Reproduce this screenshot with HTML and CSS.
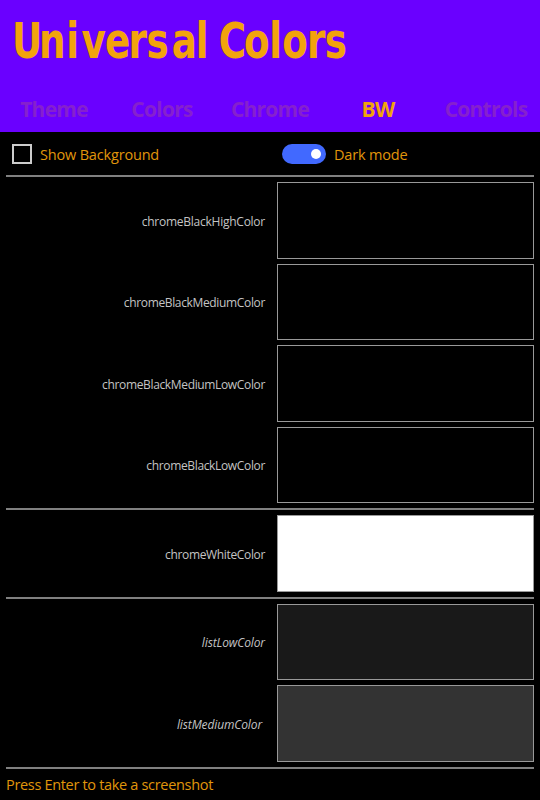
FILE: index.html
```
<!DOCTYPE html>
<html lang="en">
<head>
<meta charset="utf-8">
<title>Universal Colors</title>
<link rel="stylesheet" href="styles.css">
</head>
<body>
<header class="header">
  <svg class="title" width="540" height="80" role="heading" aria-level="1">
    <text transform="scale(.84 1)" y="58" x="14.2 46.5 79 97 125 153 174.5 204.5 233 249 260.5 290.5 320.5 336 365.5 386.5">Universal Colors</text>
  </svg>
  <nav class="tabs">
    <a class="tab">Theme</a>
    <a class="tab">Colors</a>
    <a class="tab">Chrome</a>
    <a class="tab active">BW</a>
    <a class="tab">Controls</a>
  </nav>
</header>
<main class="main">
  <div class="options">
    <label class="option"><span class="checkbox"></span><span class="option-text">Show Background</span></label>
    <label class="option"><span class="toggle"></span><span class="option-text">Dark mode</span></label>
  </div>
  <section class="group">
    <div class="row tall"><span class="name loose">chromeBlackHighColor</span><div class="swatch black"></div></div>
    <div class="row"><span class="name">chromeBlackMediumColor</span><div class="swatch black"></div></div>
    <div class="row tall"><span class="name">chromeBlackMediumLowColor</span><div class="swatch black"></div></div>
    <div class="row"><span class="name">chromeBlackLowColor</span><div class="swatch black"></div></div>
  </section>
  <section class="group">
    <div class="row tall"><span class="name">chromeWhiteColor</span><div class="swatch white"></div></div>
  </section>
  <section class="group">
    <div class="row"><span class="name italic">listLowColor</span><div class="swatch low"></div></div>
    <div class="row tall"><span class="name italic inset">listMediumColor</span><div class="swatch medium"></div></div>
  </section>
  <footer class="footer">Press Enter to take a screenshot</footer>
</main>
</body>
</html>
```
FILE: styles.css
```
* { box-sizing: border-box; }
body {
  margin: 0;
  width: 540px;
  height: 800px;
  overflow: hidden;
  background: #000;
  color: #f2a30c;
  font-family: "Open Sans", "Noto Sans", sans-serif;
}
.header { height: 132px; background: #6a00ff; }
.title { display: block; }
.title text {
  font: bold 49.4px "DejaVu Sans Condensed", "DejaVu Sans", sans-serif;
  fill: #f2a30c;
}
.tabs {
  display: grid;
  grid-template-columns: repeat(5, 108px);
  height: 52px;
  padding-top: 14px;
}
.tab {
  text-align: center;
  font-size: 21px;
  letter-spacing: -0.75px;
  line-height: 30px;
  font-weight: 700;
  color: #8520ce;
}
.active { color: #f2a30c; }
.main { padding: 0 6px; }
.options {
  display: grid;
  grid-template-columns: 270px 1fr;
  height: 43px;
  padding-left: 6px;
}
.option {
  display: flex;
  align-items: center;
  gap: 8px;
  font-size: 14.5px;
  color: #e0960b;
  white-space: nowrap;
}
.option-text { padding-top: 2px; letter-spacing: -0.18px; }
.checkbox { width: 20px; height: 20px; border: 2px solid #ccc; }
.toggle {
  display: flex;
  align-items: center;
  justify-content: flex-end;
  width: 44px;
  height: 20px;
  padding-right: 5px;
  border-radius: 10px;
  background: #4169ff;
}
.toggle::after { content: ""; width: 10px; height: 10px; border-radius: 50%; background: #fff; }
.group {
  display: flex;
  flex-direction: column;
  gap: 5px;
  padding: 5px 0;
  border-top: 2px solid #808080;
}
.row { display: grid; grid-template-columns: 259px 257px; column-gap: 12px; height: 76px; align-items: center; }
.tall { height: 77px; }
.name {
  padding-top: 2px;
  text-align: right;
  font-size: 12px;
  line-height: 18px;
  letter-spacing: -0.35px;
  color: #c4c4c4;
}
.loose { letter-spacing: -0.25px; }
.italic { font-style: italic; letter-spacing: -0.12px; }
.inset { padding-right: 3px; }
.swatch { height: 100%; border: 1px solid #999; }
.black { background: #000; }
.white { background: #fff; }
.low { background: #191919; }
.medium { background: #333; }
.footer {
  border-top: 2px solid #808080;
  height: 33px;
  font-size: 14.5px;
  line-height: 31px;
  letter-spacing: -0.32px;
  color: #e0960b;
}
```
